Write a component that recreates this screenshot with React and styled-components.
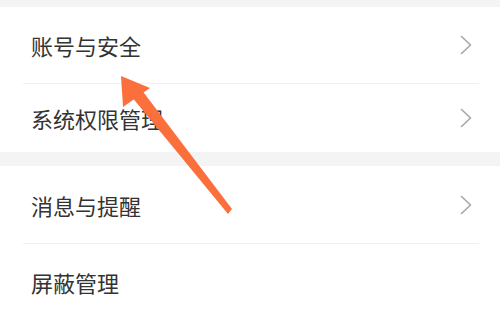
import React from 'react';
import styled, { createGlobalStyle } from 'styled-components';

const GlobalStyle = createGlobalStyle`
  html, body {
    margin: 0;
    padding: 0;
    background: #fff;
  }
  body {
    font-family: "Noto Sans CJK SC", "Noto Sans", sans-serif;
  }
`;

const Page = styled.div`
  position: relative;
  width: 500px;
  height: 312px;
  overflow: hidden;
  background: #fff;
  display: flex;
  flex-direction: column;
`;

const Gap = styled.div`
  flex: none;
  height: ${p => p.h}px;
  background: #f4f4f4;
`;

const Row = styled.div`
  flex: none;
  height: ${p => p.h}px;
  display: flex;
  align-items: center;
  justify-content: space-between;
  padding: 0 28px 0 31px;
`;

const Label = styled.span`
  font-size: 22px;
  line-height: 1;
  color: #333;
`;

const Divider = styled.div`
  flex: none;
  height: 1px;
  margin: 0 21px 0 23px;
  background: #f1f1f1;
`;

const Chevron = () => (
  <svg width="12" height="20" viewBox="0 0 12 20">
    <polyline
      points="1.5,1.5 10.5,10 1.5,18.5"
      fill="none"
      stroke="#a6a6a6"
      strokeWidth="1.6"
      strokeLinecap="round"
      strokeLinejoin="round"
    />
  </svg>
);

const Overlay = styled.svg`
  position: absolute;
  left: 0;
  top: 0;
  pointer-events: none;
`;

const App = () => {
  return (
    <>
      <GlobalStyle />
      <Page>
        <Gap h={7} />
        <Row h={76}>
          <Label>账号与安全</Label>
          <Chevron />
        </Row>
        <Divider />
        <Row h={68}>
          <Label>系统权限管理</Label>
          <Chevron />
        </Row>
        <Gap h={14} />
        <Row h={77}>
          <Label>消息与提醒</Label>
          <Chevron />
        </Row>
        <Divider />
        <Row h={76}>
          <Label>屏蔽管理</Label>
        </Row>

        {/* orange pointer drawn over the list */}
        <Overlay width="500" height="312" viewBox="0 0 500 312">
          <polygon points="121,76 150,88 123,107" fill="#fb6f3d" />
          <polygon points="131,96 141,89 232,209 228,214" fill="#fb6f3d" />
        </Overlay>
      </Page>
    </>
  );
};

export default App;
